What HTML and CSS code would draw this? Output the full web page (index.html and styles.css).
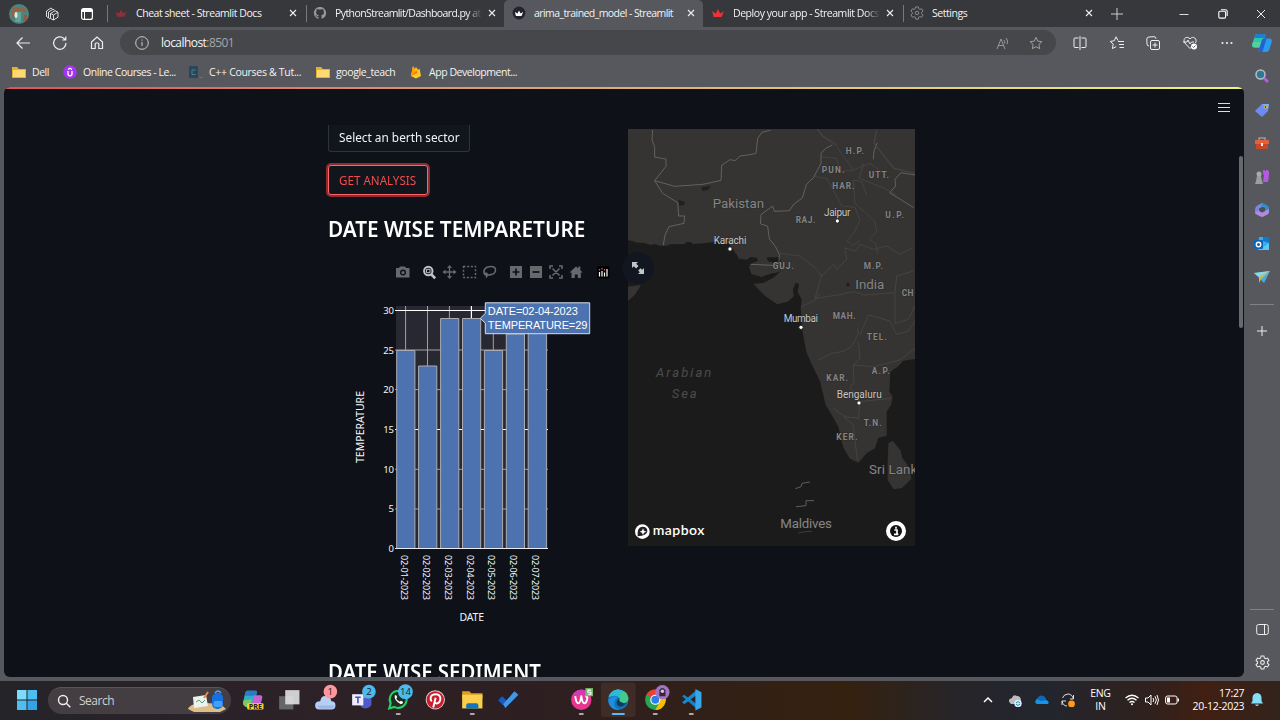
FILE: index.html
```html
<!DOCTYPE html>
<html lang="en">
<head>
<meta charset="utf-8">
<title>arima_trained_model - Streamlit</title>
<link rel="stylesheet" href="styles.css">
</head>
<body>
<svg class="defs" width="0" height="0">
  <symbol id="x" viewBox="0 0 8 8"><path d="M1 1l6 6M7 1l-6 6" fill="none" stroke="#eee" stroke-width="1.1"/></symbol>
  <symbol id="crown" viewBox="0 0 16 12"><path d="M2 11 0 3l5 3 3-6 3 6 5-3-3 8z"/></symbol>
  <symbol id="folder" viewBox="0 0 14 12"><path d="M0 1h5l2 2h7v9H0z" fill="#e3b02f"/><path d="M1 4h12v7H1z" fill="#ffda70"/></symbol>
  <symbol id="gear" viewBox="0 0 16 16"><path d="M6.5 1h3l.5 2.2 1.2.7 2.2-.7 1.5 2.6-1.6 1.5v1.4l1.6 1.5-1.5 2.6-2.2-.7-1.2.7-.5 2.2h-3L6 12.8l-1.200-.7-2.200.7L1.100 10.200 2.700 8.700V7.300L1.100 5.800l1.500-2.600 2.200.7L6 3.200z" fill="none" stroke-width="1.100"/><circle cx="8" cy="8" r="2" fill="none" stroke-width="1.100"/></symbol>
</svg>

<header class="tabs">
  <div class="tabs-lead">
    <svg class="avatar" viewBox="0 0 20 20"><circle cx="10" cy="10" r="10" fill="#48867f"/><path d="M2 7 4 4l10-1 4 4-2 2-3-2H6l-1 9-2-3z" fill="#916349"/><path d="M7 8h5v10H6z" fill="#5ea49a"/><ellipse cx="7" cy="11" rx="1.500" ry="3" fill="#ebe6da"/><path d="M15 11h3v5l-4 2z" fill="#8d5b45"/></svg>
    <svg class="i14" viewBox="0 0 14 14" fill="none" stroke="#ddd" stroke-linejoin="round"><path d="M3 10.500 1.500 9.500V4L6 1l1.500 1M5 12 3.500 11V5L8 2.300l1.500.8M5.500 6.500 10 3.700l3 1.500v5L8.500 13l-3-1.500zM5.500 6.500l3 1.500v5M8.500 8 13 5.200"/></svg>
    <svg class="i12" viewBox="0 0 12 12"><rect x=".6" y=".6" width="10.800" height="10.800" rx="2" fill="none" stroke="#fff" stroke-width="1.200"/><path d="M1 1h10v3H1z" fill="#fff"/><path d="M3.500 4v7" stroke="#fff"/></svg>
  </div>
  <div class="tab"><svg class="fav" viewBox="0 0 16 16"><use href="#crown" x="2" y="4" width="12" height="9" fill="#903136"/></svg><span class="t">Cheat sheet - Streamlit Docs</span><svg class="close"><use href="#x"/></svg></div>
  <div class="tab"><svg class="fav" viewBox="0 0 16 16"><path fill="#96979a" d="M8 1C4 1 1 4 1 8c0 3 2 5.700 4.800 6.700.4 0 .5-.2.5-.5v-1.500c-2 .4-2.500-1-2.500-1-.3-.8-.8-1-.8-1-.6-.4 0-.4 0-.4.800 0 1.200.7 1.200.7.700 1.200 1.700.9 2.100.7 0-.5.200-.9.400-1-1.600-.2-3.200-.8-3.200-3.500 0-.8.300-1.400.7-1.900 0-.200-.300-.9.100-1.900 0 0 .600-.2 2 .7a7 7 0 0 1 3.500 0c1.300-.9 1.900-.7 1.900-.7.400 1 .2 1.700.1 1.900.5.500.7 1.100.7 1.900 0 2.700-1.600 3.300-3.200 3.500.300.2.500.7.500 1.300v2c0 .2.100.5.500.5A7 7 0 0 0 15 8c0-4-3-7-7-7z"/></svg><span class="t t-long fade">PythonStreamlit/Dashboard.py at</span><svg class="close"><use href="#x"/></svg></div>
  <div class="tab active"><svg class="fav" viewBox="0 0 16 16"><circle cx="8" cy="8" r="7.300" fill="#22252e"/><use href="#crown" x="3" y="5" width="10" height="7" fill="#fff"/></svg><span class="t t-active">arima_trained_model - Streamlit</span><svg class="close"><use href="#x"/></svg></div>
  <div class="tab nosep"><svg class="fav" viewBox="0 0 16 16"><use href="#crown" x="1" y="3.500" width="14" height="10" fill="#ef3037"/></svg><span class="t fade">Deploy your app - Streamlit Docs</span><svg class="close"><use href="#x"/></svg></div>
  <div class="tab"><svg class="fav" stroke="#8c8d90"><use href="#gear"/></svg><span class="t">Settings</span><svg class="close"><use href="#x"/></svg></div>
  <svg class="newtab" viewBox="0 0 12 12" stroke="#ccc" stroke-width="1"><path d="M0 6h12M6 0v12"/></svg>
  <div class="winctl">
    <svg class="i10" viewBox="0 0 10 10" stroke="#ddd"><path d="M.5 5.500h9"/></svg>
    <svg class="i10" viewBox="0 0 10 10" fill="none" stroke="#fff" stroke-width="1.100"><rect x=".8" y="2.300" width="6.800" height="6.800" rx="1.200"/><path d="M3 .8h4.500Q9.200.8 9.200 2.500V7"/></svg>
    <svg class="i10" viewBox="0 0 10 10" stroke="#eee"><path d="m1 1 8 8M9 1 1 9"/></svg>
  </div>
</header>

<nav class="toolbar">
  <div class="nav">
    <svg class="i16" viewBox="0 0 16 16" fill="none" stroke="#eee" stroke-width="1.200"><path d="M15 8H2M7.500 2.500 2 8l5.500 5.500"/></svg>
    <svg class="i16" viewBox="0 0 16 16" fill="none" stroke="#eee" stroke-width="1.200"><path d="M14 8a6.200 6.200 0 1 1-2-4.500L13.500 5M13.800 1.500V5h-3.500"/></svg>
    <svg class="i16" viewBox="0 0 16 16" fill="none" stroke="#eee" stroke-width="1.200"><path d="M2.500 7 8 2l5.500 5v6.500h-3.700V9q0-1-1-1H7.200q-1 0-1 1v4.500H2.500z"/></svg>
  </div>
  <div class="address">
    <svg class="i14" viewBox="0 0 14 14" fill="none" stroke="#ccc"><circle cx="7" cy="7" r="6.300"/><path d="M7 6v4M7 3.500v1.200"/></svg>
    <span class="url">localhost<i>:8501</i></span>
    <svg class="i14" viewBox="0 0 14 14" fill="none" stroke="#98999b"><path d="m1 13 4-10 4 10M2.500 9.500h5M8 4q1.500 1.500.5 3.500M10 2q3 3 1 6"/></svg>
    <svg class="i14" viewBox="0 0 16 16" fill="none" stroke="#aaa"><path d="m8 1.500 2 4.400 4.800.6-3.500 3.200.9 4.800L8 12.200l-4.200 2.300.9-4.800L1.200 6.500 6 5.900z"/></svg>
  </div>
  <div class="actions">
    <svg class="i14" viewBox="0 0 14 14" fill="none" stroke="#eee"><path d="M5.500 2H2Q1 2 1 3v7.500q0 1 1 1h3.500M8.500 2H12q1 0 1 1v7.500q0 1-1 1H8.500M7 0v14"/></svg>
    <svg class="i14" viewBox="0 0 14 14" fill="none" stroke="#eee"><path d="M8 4.500 6 .8l-1.800 4-4 .6 3 2.700-.8 4.500 3.800-2M8 5.500h6M9 8.500h5M9.500 11.500H14"/></svg>
    <svg class="i14" viewBox="0 0 14 14" fill="none" stroke="#eee"><rect x="4.500" y="4.500" width="9" height="9" rx="1.500"/><path d="M9 6.500v5M6.500 9h5M3 10Q1 10 1 8L.8 3Q1 1 3 1l5-.3q2 0 2 2"/></svg>
    <svg class="i14" viewBox="0 0 14 14" fill="none" stroke="#eee"><path d="M12.500 7C15 3 10 -1 7 3 4-1-1 3 1.800 7l5.200 5.500 2-2M0 6h4l1-2 2 4 1.500-2H11"/><circle cx="11" cy="10.500" r="3" fill="#fff" stroke="none"/><path d="m9.500 10.500 1 1 2-2" stroke="#55565b"/></svg>
    <svg class="i14" viewBox="0 0 14 14" fill="#eee"><circle cx="2.500" cy="7" r="1.100"/><circle cx="7" cy="7" r="1.100"/><circle cx="11.500" cy="7" r="1.100"/></svg>
    <svg class="copilot" viewBox="0 0 20 20"><path d="M5.500 1H12q1.800 0 1.300 2L10 13q-.6 1.500-2 1.500H2.500Q-.5 14.500.3 11L2.500 4Q3.300 1 5.500 1z" fill="#2fc3b0"/><path d="M5.500 1H12q1.800 0 1.300 2l-.6 2H2.200Q3 1 5.500 1z" fill="#1c7fd2"/><path d="M1 9h10l-1.600 4.500Q9 14.500 8 14.500H2.500Q-.5 14.500.3 11z" fill="#4fd39a"/><path d="M12 5.500h5.500q3 0 2.200 3.500l-2.200 7q-.8 3-3 3H8q-1.800 0-1.300-2L10 7q.6-1.500 2-1.500z" fill="#2a9cf0"/><path d="M12 5.500h2.500L10.500 19H8q-1.800 0-1.300-2L10 7q.6-1.500 2-1.500z" fill="#2260d4"/></svg>
  </div>
</nav>

<div class="middle">
  <div class="left">
    <div class="bookmarks">
      <a><svg class="i14"><use href="#folder"/></svg><span>Dell</span></a>
      <a class="b2"><svg class="i14" viewBox="0 0 14 14"><circle cx="7" cy="7" r="6.800" fill="#a435f0"/><path d="M5 6v3q0 1.800 2 1.800T9 9V6M5 4.500l2-1.300 2 1.300" fill="none" stroke="#fff" stroke-width="1.300"/></svg><span>Online Courses - Le...</span></a>
      <a class="b3"><svg class="i14" viewBox="0 0 14 14"><rect x="0" y="1" width="9" height="12" fill="#27475c"/><path d="M6.500 5H3v4.500h3.500M10.500 12.500h3" fill="none" stroke="#5a7a8a"/></svg><span>C++ Courses &amp; Tut...</span></a>
      <a class="b4"><svg class="i14"><use href="#folder"/></svg><span>google_teach</span></a>
      <a class="b5"><svg class="i14" viewBox="0 0 14 14"><path d="m2 11 2-10 2 3 1-2 2 3 1.500-1.500L12 11l-5 2.500z" fill="#ffca28"/><path d="M2 11 4 1l3 5.500z" fill="#ffa000"/><path d="m2 11 6-6 .5 3z" fill="#f57c00"/></svg><span>App Development...</span></a>
    </div>

    <main class="page">
      <div class="rainbow"></div>
      <div class="apphead"><span class="burger"></span></div>
      <div class="content">
        <section class="panel">
          <div class="select"><span>Select an berth sector</span></div>
          <button class="analysis"><span>GET ANALYSIS</span></button>
          <h2><span class="h-temp">DATE WISE TEMPARETURE</span></h2>
          <svg class="chart" viewBox="328 250 290 390">
            <g fill="#67696d">
              <path d="M396 268h3l1-1.500h5l1 1.500h3.500v9.500H396z"/><circle cx="403" cy="272.500" r="3" fill="#0e1117"/><circle cx="403" cy="272.500" r="1.600"/>
              <g fill="none" stroke="#c2c3c4"><circle cx="428.300" cy="271" r="4.200" stroke-width="2"/><path d="m431.500 274.500 3.700 3.800" stroke-width="2.600"/><path d="M426.500 269.300h3.500v3.400h-3.500z"/></g>
              <path d="m449.500 265 2.500 3h-1.800v3.300h3.300v-1.800l3 2.500-3 2.500v-1.800h-3.300v3.300h1.800l-2.500 3-2.500-3h1.800v-3.300h-3.300v1.800l-3-2.500 3-2.500v1.800h3.300V268H447z"/>
              <rect x="463.500" y="266.500" width="12" height="11" fill="none" stroke="#67696d" stroke-width="1.500" stroke-dasharray="2 1.700"/>
              <path d="M485 275q-2-3-.5-5.500 2-3 6.500-3t4.500 3.500-4 4.500-6.500 0q0-2 2-1 .8 2-1 4" fill="none" stroke="#67696d" stroke-width="1.500"/>
              <path d="M510 266h12v12h-12z"/><path d="M516 268.500v7M512.500 272h7" stroke="#0e1117" stroke-width="1.700"/>
              <path d="M530 266h12v12h-12z"/><path d="M532.500 272h7" stroke="#0e1117" stroke-width="1.700"/>
              <path d="M550 269v-3h3M559 266h3v3M562 275v3h-3M553 278h-3v-3M552.500 268.500l7 7M559.500 268.500l-7 7" fill="none" stroke="#67696d" stroke-width="1.500"/>
              <path d="m569.500 272.500 6.500-6 2.300 2V266.500h2v3.700l2.500 2.300h-2v5.500h-3v-3.500h-3v3.500h-3.300v-5.500z"/>
              <rect x="597" y="266" width="12.500" height="12.500" rx="1.500" fill="#000"/><path d="M599.500 272v4.500M602 271v5.500M604.500 272.500v4M607 269v7.500" stroke="#fff" stroke-width="1.200"/><path d="M599.500 269v1.500M602 268v1.500M604.500 269v1.500" stroke="#e05a71" stroke-width="1.200"/>
            </g>
            <path d="M396 306h151.700v242.500H396z" fill="#282832"/>
            <path d="M405.600 306v242M427.500 306v242M449.400 306v242M493.300 306v242M515.200 306v242M537 306v242M395 350h153M395 389.600h153M395 469.300h153M395 509h153" stroke="#a1a1a5" fill="none"/>
            <path d="M471.400 306v12M395 310.500h153M395 429.500h153" stroke="#fff" stroke-width="1.200"/>
            <g fill="#4c72b0" stroke="#a9aab2"><path d="M396.700 350.500h18.200v198h-18.200zM418.600 366h18.200v182.500h-18.200zM440.600 318.500h18.200v230h-18.200zM462.500 318.500h18.200v230h-18.200zM484.400 350.500h18.200v198h-18.200zM506.300 334h18.200v214.500h-18.200zM528.200 326.500h18.200v222h-18.200z"/></g>
            <path d="M395 548.500h153" stroke="#e8eaf0"/>
            <g class="tick" text-anchor="end"><text x="394" y="314">30</text><text x="394" y="353.700">25</text><text x="394" y="393.300">20</text><text x="394" y="433">15</text><text x="394" y="472.700">10</text><text x="394" y="512.300">5</text><text x="394" y="552">0</text></g>
            <g class="date">
              <text transform="translate(401 555) rotate(90)" textLength="45">02-01-2023</text><text transform="translate(423 555) rotate(90)" textLength="45">02-02-2023</text><text transform="translate(445 555) rotate(90)" textLength="45">02-03-2023</text><text transform="translate(467 555) rotate(90)" textLength="45">02-04-2023</text><text transform="translate(488 555) rotate(90)" textLength="45">02-05-2023</text><text transform="translate(510 555) rotate(90)" textLength="45">02-06-2023</text><text transform="translate(532 555) rotate(90)" textLength="45">02-07-2023</text>
            </g>
            <text class="axis" transform="translate(363.500 463) rotate(-90)" textLength="72">TEMPERATURE</text>
            <text class="axis" x="459.500" y="621" textLength="24.500">DATE</text>
            <path d="M485.300 302.800h104.400v30.900H485.300v-10.500l-5-4.900 5-4.900z" fill="#4c72b0" stroke="#d5dced"/>
            <g class="tip"><text x="487.800" y="315.400" textLength="90">DATE=02-04-2023</text><text x="487.800" y="329.300" textLength="99.500">TEMPERATURE=29</text></g>
          </svg>
          <h2 class="second"><span class="h-sed">DATE WISE SEDIMENT</span></h2>
        </section>

        <section class="mapbox">
          <svg class="map" viewBox="24 27 861 1251">
            <path d="M24 27H885V717l-35 5-17 18-18 12-5 8v20l-2 35 10 15-5 25-13 20v73l-25 5-10 32-25 15-25 28-25-12-20-33-15-63-15-27-23-38-17-72-25-50-15-35-12-60-6-75 3-25-12-22 4-24-10-4-8 20 2 20-18 15-32 8-35-25-33-37 20-3 25-10 25-22 15-14-6-14-85-2-38 6-10-28-40-18-50 2-65 4-32 5-38 4-42-6-64-12z" fill="#353432"/>
            <path d="M387 440q5-20 53-20l32 8-17 32-30 10-30-8zM24 500l38-4-18 28-20 18zM803 1030l2-60 13-8 24 30 5 22 22 30 5 32-28 28-25 4-18-28z" fill="#353432"/>
            <path d="m24 361 15 2 5 4 28 2 20 6 12-3 15 5 16 1 18-5 42-1 4-6h12l8 6 40-3 50-7 18 10 12 14 6 12 12 18 24 3 10-8 20 2 4 14-18 10-14 12 2 14 12 16 22 4 26-4 14-10 24-8 10 12-22 20-35 12-20 5-24 2-60 30-240-20-75-100z" fill="#1b1b1b"/>
            <path d="M387 440q5-18 53-20l44-2 10 30-9 10-30 2-30 10-30-8z" fill="#353432"/>
            <path d="M440 412h38l6 12-20 4-20-4zM440 480l22-20 22-6-10 20-20 10-12 4z" fill="#1b1b1b"/>
            <path d="m24 500 38-4-18 28-20 18z" fill="#353432"/>
            <path d="m400 491 30-2 30-16 20-18 30-10 30 40-15 5-7 20 2 20-18 15-30 8-36-24z" fill="#353432"/>
            <path d="m245 202 27-5-8 13-18 2zM175 239l20 7-1 8-16 4z" fill="#20201f"/><circle cx="684" cy="494" r="5" fill="#1b1b1b"/>
            <g fill="none" stroke="#6c6b68" stroke-width="2.500">
              <path d="m98 30-2 30 8 20v31l34 6v22l-34 43 60 17 85-6 54-12 2-45 25-17 15 3 15-14 30-4 18-4 5-45 13-18 25-6"/>
              <path d="m104 182 24 38 45 28 3 40h18l-2 22-45 10-12 25-5 30M637 75l-20 10-14 15v30l-22 42-22 22-12 40-25 18-14 20-45 2-5-16-35 26-2 27 22 8 5 38 18 22 12 24-1 28-20 5-65-3"/>
              <path d="m885 165-42-7-18 20 2 20-18 20 72 45"/><path d="m760 118 2-25 10-25M526 1106l17-6 3-10 24-4M528 1160l30-3v-15h24"/>
            </g>
            <g fill="none" stroke="#4d4c4a" stroke-width="2">
              <path d="m650 80 50 70 50-20 40 30M585 170l35 5 20 35 25 48 40 4 15 40-20 40-20 20 20 14 20-15M600 110l50 5 10 40 40-5M700 180l25 5 15 40M730 130l-12 45 75 30 35 20M700 180l5 70 60 55 5 30-22 22 20 15 5 30M480 400l60 8 50 40 15 20 35-35 10 15 30-30-5-35 30 10 15-20 40 15 40-10 40 25 40-20M605 465l-20 70 70-10 45-10 35 10 90-7 5-50 50-15M545 560l40-20 15-20M825 520v90l40-12 20-40M720 645l25-60 30 8 35 10 20 40 35-10 20-30M595 720l40-20 30-5 30-15 20-40-2-15M715 665l5 50-20 20 2 55-12 10 15 25 12 20 95-10M700 735l60 5 80-20 45-35M720 845l-5 50-40-5-35-25M670 890l30 25 5 50 8 55"/>
              <path d="m590 25 20 25 40 25M770 30l-8 40 60 75 63 15" stroke="#454442" stroke-width="4"/>
            </g>
            <g fill="#fff" stroke="#222" stroke-width="3"><circle cx="652" cy="303" r="6.500"/><circle cx="330" cy="387" r="6.500"/><circle cx="543" cy="622" r="6.500"/><circle cx="717" cy="849" r="6.500"/></g>
            <g class="country"><text x="278" y="263" textLength="154">Pakistan</text><text x="706" y="507" textLength="87">India</text><text x="747" y="1062" textLength="145">Sri Lank</text><text x="481" y="1224" textLength="155">Maldives</text></g>
            <g class="city"><text x="612" y="288" textLength="79">Jaipur</text><text x="281" y="371" textLength="98">Karachi</text><text x="491" y="605" textLength="103">Mumbai</text><text x="650" y="833" textLength="135">Bengaluru</text></g>
            <g class="state"><text x="677" y="101" textLength="55">H.P.</text><text x="605" y="159" textLength="69">PUN.</text><text x="746" y="174" textLength="61">UTT.</text><text x="637" y="206" textLength="66">HAR.</text><text x="796" y="294" textLength="56">U.P.</text><text x="527" y="309" textLength="59">RAJ.</text><text x="458" y="446" textLength="63">GUJ.</text><text x="731" y="447" textLength="58">M.P.</text><text x="845" y="528" textLength="35">CH</text><text x="638" y="598" textLength="69">MAH.</text><text x="740" y="659" textLength="60">TEL.</text><text x="755" y="761" textLength="55">A.P.</text><text x="619" y="782" textLength="65">KAR.</text><text x="731" y="917" textLength="54">T.N.</text><text x="649" y="961" textLength="63">KER.</text></g>
            <g class="sea"><text x="108" y="772" textLength="166">Arabian</text><text x="155" y="834" textLength="75">Sea</text></g>
            <path d="m535 1239 20-4 22-1" fill="none" stroke="#4d4c4a" stroke-width="2"/>
            <circle cx="67" cy="1235" r="22" fill="#fff"/><path d="M53 1249q-3-27 14-29 16 0 15 14t-29 15z" fill="#222"/><path d="m69 1225 3 7 7 3-7 3-3 7-3-7-7-3 7-3z" fill="#fff"/>
            <text class="brand" x="98" y="1246" textLength="155">mapbox</text>
            <circle cx="828" cy="1233" r="30" fill="#fff"/><circle cx="828" cy="1233" r="18" fill="#111"/><path d="M823 1230h8v13M822 1243h13M828 1220v6" stroke="#fff" stroke-width="5" fill="none"/>
          </svg>
          <div class="expand"><svg class="i14" viewBox="0 0 14 14"><path d="M1 1h6L5.200 2.800 7.500 5.100 5.100 7.500 2.800 5.200 1 7zM13 13H7l1.800-1.800-1.600-1.600 2.400-2.400 1.600 1.600L13 7z" fill="#c2c5c9"/></svg></div>
        </section>
        <span class="scroll"></span>
      </div>
    </main>
  </div>

  <aside class="side">
    <svg class="i16" viewBox="0 0 16 16"><circle cx="6.500" cy="6.500" r="4.500" fill="#28799a" stroke="#b9bdc0" stroke-width="1.500"/><path d="m10 10 4 4" stroke="#b75ce0" stroke-width="2.800"/></svg>
    <svg class="i16" viewBox="0 0 16 16"><path d="m1 9 7-7h7l-1 7-6 6z" fill="#6c8bf4"/><path d="M8 2h7l-1 5z" fill="#77b3ef"/><circle cx="11.500" cy="5" r="1.400" fill="#444" stroke="#e7c154"/></svg>
    <svg class="i16" viewBox="0 0 16 16"><path d="M5 5V3h6v2" fill="none" stroke="#999" stroke-width="1.500"/><path d="M1 5h14v4H1z" fill="#e1613a"/><path d="M2 9h12v5H2z" fill="#c8472b"/><path d="M7 8h2v3H7z" fill="#eee"/></svg>
    <svg class="i16" viewBox="0 0 16 16"><circle cx="5" cy="5" r="2.500" fill="#aaa"/><path d="M3 7h4l1 5 1 3H1l1-3z" fill="#9d9d9d"/><path d="M9 1h2v1h1V1h2v1h1v4l-1 7H9L10 6 9 5z" fill="#b35bdd"/></svg>
    <svg class="i16" viewBox="0 0 16 16"><path d="M8.500.8 4 3Q1 4.500 1 8v3l4-2V6.500L10 4z" fill="#7b86e4"/><path d="m8.500.8 5 2.700Q15 4.500 15 6.500V11l-4-2V6L7 4z" fill="#2f8fc4"/><path d="m1 10.500 4-2 3 2 7-3.500v3q0 1.500-1.500 2.500l-4 2q-1.500.8-3 0l-4-2Q1 11.800 1 10.500z" fill="#b08ade"/><path d="m5.500 6.500 3-1.500L11 6.500V9l-3 1.500L5.500 9z" fill="#4c4e57"/></svg>
    <svg class="i16" viewBox="0 0 16 16"><path d="M5 1h10v13H4z" fill="#37aaf0"/><path d="M9 1h6v6l-6-2z" fill="#1478c9"/><path d="m5 14 10-7v7z" fill="#58c9ef"/><rect y="4" width="9" height="9" rx="1" fill="#0b65b8"/><circle cx="4.500" cy="8.500" r="2.200" fill="none" stroke="#fff" stroke-width="1.400"/></svg>
    <svg class="i16" viewBox="0 0 16 16"><path d="M0 4 16 2 10 14 6 10z" fill="#48a9e5"/><path d="M0 4 16 2 5 8z" fill="#8ed9e0"/><path d="m16 2-11 6v6l2-4z" fill="#d9b944"/></svg>
    <hr>
    <svg class="plus" viewBox="0 0 10 10" stroke="#eee"><path d="M0 5h10M5 0v10"/></svg>
    <div class="side-foot">
      <hr>
      <svg class="i13" viewBox="0 0 13 13" fill="none" stroke="#eee"><rect x=".7" y="1.500" width="11.600" height="10" rx="2"/><path d="M8.500 2v9"/></svg>
      <svg class="i15" stroke="#eee"><use href="#gear"/></svg>
    </div>
  </aside>
</div>

<footer class="taskbar">
  <svg class="start" viewBox="0 0 20 20" fill="#4ebdf0"><path d="M0 0h9.500v9.500H0z" fill="#7bdcff"/><path d="M10.500 0H20v9.500h-9.500zM0 10.500h9.500V20H0z"/><path d="M10.500 10.500H20V20h-9.500z" fill="#36a2e6"/></svg>
  <div class="search">
    <svg class="i14" viewBox="0 0 14 14" fill="none" stroke="#eee" stroke-width="1.400"><circle cx="6" cy="6" r="4.500"/><path d="m9.300 9.300 4 4"/></svg>
    <span>Search</span>
    <svg class="art" viewBox="0 0 38 22"><path d="M0 19q2-6 18-6t20 6l-6 3H6z" fill="#dfbd86"/><path d="m5 7 13-2 2 11-14 2z" fill="#edf2ed"/><path d="m8 12 3-2 3 3 3-3" stroke="#5a9c76" fill="none"/><path d="m16 8 4-6" stroke="#e6884a" stroke-width="2"/><rect x="24" y="3" width="11" height="16" rx="5" fill="#1670df"/><rect x="25.500" y="11" width="9" height="6" rx="2" fill="#43a0fa"/><path d="M27 3q3-4 6 0" stroke="#4aa8fd" fill="none" stroke-width="1.500"/></svg>
  </div>
  <div class="apps">
    <svg viewBox="0 0 36 36"><path d="M13 8.500h8q2 0 1.500 2L19 21q-.6 2-2.500 2H11q-3 0-2-3.500L11 11q.5-2.500 2-2.500z" fill="#30adc8"/><path d="M13 8.500h8q2 0 1.500 2l-1 3H10.500l.5-2.500q.5-2.500 2-2.500z" fill="#267dca"/><path d="M20 13h6q2.500 0 1.700 3l-2 8q-.6 2-2.700 2h-7l3.500-11q.2-2 .5-2z" fill="#c762d2"/><path d="m9.500 18 8.500-1-3 8h-2q-4.500-1-4-5z" fill="#77ca61"/><rect x="13" y="21" width="16" height="6" rx="1" fill="#ffd22b"/><text x="14.500" y="26.200" class="pre" textLength="13" lengthAdjust="spacingAndGlyphs">PRE</text></svg>
    <svg viewBox="0 0 36 36"><path d="M8 14h14v13H8z" fill="#666"/><path d="M14 8h14v14H14z" fill="#ddd" opacity=".92"/></svg>
    <svg viewBox="0 0 36 36"><path d="M12 27q-4 0-4-4t5-4q1-6 6-5 4 0 5 5 4 0 4 4t-4 4z" fill="#b8cff5"/><path d="M10 23h17l-2 3H12z" fill="#9ab7e6"/><circle cx="23" cy="9.500" r="6.700" fill="#ff969c"/><text class="badge" x="23" y="13">1</text></svg>
    <svg viewBox="0 0 36 36"><circle cx="22" cy="14" r="4" fill="#7b83e8"/><path d="M16 16h11v6q-1 4-6 4t-5-4z" fill="#5059c9"/><rect x="8" y="12" width="11" height="11" fill="#eef"/><path d="M11 15h5.500M13.700 15v6" stroke="#4b53ba" stroke-width="1.600"/><circle cx="24.500" cy="9.500" r="6.700" fill="#4abaf0"/><text class="badge" x="24.500" y="13">2</text></svg>
    <svg viewBox="0 0 36 36"><path d="m9 26 1.500-5A8.300 8.300 0 1 1 14 24.500z" fill="#202b22" stroke="#25d366" stroke-width="2"/><path d="M14.500 13q-1 5 6 9l2-1v-1.500l-2-1-1 1q-3-1-3.500-3.500l1-1-1-2z" fill="#fff"/><circle cx="25" cy="9.500" r="7.300" fill="#4abaf0"/><text class="badge" x="25" y="13">14</text><rect x="15.500" y="30.500" width="5" height="2" rx="1" fill="#aaa"/></svg>
    <svg viewBox="0 0 36 36"><circle cx="18" cy="17.500" r="9" fill="#c91d2e" stroke="#e4c7c4"/><path d="M14.500 19q-1.500-1.500-1-4 1-3 5-3t4.500 4q0 4-3 5-1.500.5-2.500-1M18.300 15.500 16 25" fill="none" stroke="#fff" stroke-width="1.900"/></svg>
    <svg viewBox="0 0 36 36"><path d="M8 9h7l2 2h11v5H8z" fill="#dc9f20"/><path d="M8 12.500h20V26H8z" fill="#f9cf4b"/><path d="M12 26v-3q0-2 2-2h8q2 0 2 2v3z" fill="#1474bd"/><rect x="15.500" y="30.500" width="5" height="2" rx="1" fill="#aaa"/></svg>
    <svg viewBox="0 0 36 36"><path d="m8 18 4-4 5 5-4 4z" fill="#185abd"/><path d="m13 22 11-13 4 3.500L15 25.500z" fill="#3e98ec"/></svg>
    <svg class="gap" viewBox="0 0 36 36"><circle cx="18" cy="17.500" r="10" fill="#e93592"/><path d="M9 14a10 10 0 0 1 13-6v5H9z" fill="#c63bd0" opacity=".6"/><path d="M12 14q1 7 3 7t3-7q1 7 3 7t3-5q0-2-2-2" fill="none" stroke="#fff" stroke-width="1.900" stroke-linejoin="round"/><rect x="22" y="6" width="7.500" height="8" fill="#72bc6c"/><path d="M27.500 8h-3v2h3v2h-3" stroke="#fff" fill="none"/><rect x="15.500" y="30.500" width="5" height="2" rx="1" fill="#aaa"/></svg>
    <svg viewBox="0 0 36 36"><rect x="1" y=".5" width="34" height="34" rx="3" fill="#3f2c27"/><circle cx="18" cy="17.500" r="10" fill="#1473b8"/><path d="M8.500 15Q11 7.500 18 7.500q9 1 10 8 0 6-7 5-4-1-1.500-4Q18 10 8.500 15z" fill="#42cb8c"/><path d="M8.500 15Q11 7.500 18 7.500q4 .3 6 2-5 0-5 7-2-5-10.500-1.500z" fill="#2eb9d6"/><path d="M8 18q4-6 10-3-3 1-4 6 0 5 5 6.400Q9 28 8 18z" fill="#1e8fdf"/><path d="M19 15.500q-1 2 1 4 3 2 6 1-3 5-8 3-4-3 1-8z" fill="#123c5c"/><rect x="11.500" y="30.500" width="13" height="2" rx="1" fill="#5abaf5"/></svg>
    <svg viewBox="0 0 36 36"><circle cx="18" cy="17.500" r="10" fill="#2ba351"/><path d="M18 17.500 9.300 12.500A10 10 0 0 1 27 13z" fill="#e94235"/><path d="M18 12.500h9a10 10 0 0 1-9 15l4.500-8z" fill="#fabd05"/><circle cx="18" cy="17.500" r="5" fill="#fff"/><circle cx="18" cy="17.500" r="3.900" fill="#2c80ee"/><circle cx="25" cy="10" r="7" fill="#a573c4"/><path d="M22 14V8q3-4 6 0v6z" fill="#33283f"/><circle cx="25" cy="9" r="1.700" fill="#d8c8d3"/><rect x="15.500" y="30.500" width="5" height="2" rx="1" fill="#aaa"/></svg>
    <svg viewBox="0 0 36 36"><path d="m9 14 2-1.500 12 9V26z" fill="#1482c8"/><path d="m9 20 2 2 12-9V8z" fill="#1789d2"/><path d="m22 7 6 3v15l-6 3z" fill="#37a7ec"/><rect x="15.500" y="30.500" width="5" height="2" rx="1" fill="#aaa"/></svg>
  </div>
  <div class="tray">
    <svg class="i14" viewBox="0 0 14 14" fill="none" stroke="#fff" stroke-width="1.500"><path d="m3 9 4-4 4 4"/></svg>
    <svg class="i14" viewBox="0 0 14 14"><path d="M2 10q-3-4 2-5 1-4 5-2 4 0 4 5v3H3z" fill="#bbb"/><circle cx="10" cy="10.500" r="3.700" fill="#d7edf7"/><path d="M8 10q2-3 4 0M8 11q2 3 4 0" fill="none" stroke="#2588bc"/></svg>
    <svg class="i14" viewBox="0 0 14 14"><path d="M2 11q-3-1-1-4 1-2 3-1 1-4 5-2 2 1 2 3 4 1 2 4z" fill="#1594e8"/><path d="M2 6q2-5 7-3l2 4-5 1z" fill="#0a67bd"/></svg>
    <svg class="i14" viewBox="0 0 14 14"><path d="M12.500 6Q11 1 7 1T1.500 5M1 8q1 5 5 5M12.500 2v4H9M1 12V8h4" fill="none" stroke="#ddd"/><circle cx="10.500" cy="11" r="3.400" fill="#ff9c13"/></svg>
    <div class="lang"><span>ENG</span><span>IN</span></div>
    <div class="sys">
    <svg class="i14" viewBox="0 0 14 14" fill="none" stroke="#fff" stroke-width="1.300"><path d="M.5 5q6.500-5.500 13 0M2.500 7.300q4.500-4 9 0M4.500 9.500q2.500-2 5 0"/><circle cx="7" cy="11.300" r="1" fill="#fff" stroke="none"/></svg>
    <svg class="i14" viewBox="0 0 14 14" fill="none" stroke="#fff"><path d="M.5 5v4h2.500l3 3V2L3 5zM8 5q1.500 2 0 4M10 3.300q2.800 3.700 0 7.400M12 2q3 5 0 10"/></svg>
    <svg class="i14" viewBox="0 0 14 14" fill="none" stroke="#fff"><rect x=".6" y="3" width="11.500" height="8" rx="2"/><path d="M2 4.500h3v5H2z" fill="#fff" stroke="none"/><path d="M13.300 5.500v3" stroke-width="1.300"/></svg>
    </div>
    <div class="clock"><span>17:27</span><span>20-12-2023</span></div>
    <svg class="bell" viewBox="0 0 12 14" fill="#86def8"><path d="M0 10.500 1.500 8V5q0-4.500 4.500-5 4.500.5 4.500 5v3l1.500 2.500zM4 11.500h4q-2 3-4 0z"/></svg>
  </div>
</footer>
</body>
</html>
```
FILE: styles.css
```css
* { box-sizing: border-box; }
body { margin: 0; width: 1280px; height: 720px; overflow: hidden; display: flex; flex-direction: column; background: #57585d; color: #f3f3f3; font: 10.5px "Open Sans", "Noto Sans", sans-serif; }
svg { display: block; flex: none; }
.defs { position: absolute; }
.i10 { width: 10px; height: 10px; } .i12 { width: 12px; height: 12px; } .i13 { width: 13px; height: 13px; }
.i14 { width: 14px; height: 14px; } .i15 { width: 15px; height: 15px; } .i16 { width: 16px; height: 16px; }

.tabs { height: 27px; flex: none; display: flex; align-items: stretch; background: #37383c; }
.tabs-lead { width: 106px; display: flex; align-items: center; padding-left: 9px; gap: 16px; }
.tabs-lead .i12 { margin-left: 6px; }
.avatar { width: 20px; height: 20px; }
.tab { width: 199px; display: flex; align-items: center; padding: 0 8px 1px 7px; position: relative; white-space: nowrap; border-left: 1px solid transparent; background: linear-gradient(#77787b, #77787b) 0 5px / 1px 17px no-repeat; }
.tab.active { background: #57585d; border-radius: 5px 5px 0 0; }
.tab.nosep { background: none; }
.fav { width: 14px; height: 14px; margin-right: 8px; }
.t { flex: 1; overflow: hidden; letter-spacing: -.45px; font-size: 10.5px; }
.t-long { letter-spacing: -.58px; }
.t-active { letter-spacing: -.58px; }
.close { width: 8px; height: 8px; margin-left: 6px; }
.fade { -webkit-mask-image: linear-gradient(90deg, #000 90%, transparent); mask-image: linear-gradient(90deg, #000 90%, transparent); }
.newtab { width: 12px; height: 12px; margin: 8px 0 0 10px; }
.winctl { flex: 1; display: flex; align-items: center; justify-content: flex-end; gap: 28.500px; padding-right: 14px; }

.toolbar { height: 31px; flex: none; display: flex; align-items: center; }
.nav { width: 120px; display: flex; gap: 21px; padding-left: 15px; }
.address { width: 936px; height: 25px; border-radius: 13px; background: #46474a; display: flex; align-items: center; padding: 0 13px 0 15px; gap: 19px; }
.url { flex: 1; margin-left: -7px; font-size: 12px; letter-spacing: -.55px; }
.url i { color: #a5a6a8; font-style: normal; }
.actions { display: flex; align-items: center; gap: 22.700px; padding-left: 17px; }
.copilot { width: 20px; height: 20px; margin-left: -4px; }

.middle { flex: 1; display: flex; min-height: 0; }
.left { width: 1244px; display: flex; flex-direction: column; }
.bookmarks { height: 29px; flex: none; display: flex; align-items: center; padding: 0 0 2px 12px; letter-spacing: -.46px; }
.bookmarks a { display: flex; align-items: center; gap: 6px; width: 51px; white-space: nowrap; }
.bookmarks .b2 { width: 126px; } .bookmarks .b3 { width: 127px; letter-spacing: -.3px; } .bookmarks .b4 { width: 93px; letter-spacing: -.4px; }
.page { flex: none; width: 1240px; height: 590px; margin-left: 3.500px; background: #0e1117; border-radius: 6px; overflow: hidden; }
.rainbow { height: 2px; background: linear-gradient(90deg, #dd5355, #dc9f72 40%, #edf47c); }
.apphead { height: 36px; display: flex; justify-content: flex-end; padding: 14px 14px 0; }
.burger { width: 12px; height: 9px; border-top: 1.300px solid #ddd; border-bottom: 1.300px solid #ddd; background: linear-gradient(#ddd, #ddd) 0 50% / 12px 1px no-repeat; }
.content { height: 552px; overflow: hidden; display: flex; padding-left: 324.500px; font-family: "Noto Sans", sans-serif; }
.panel { width: 300px; }
.select { width: 142px; height: 27px; border: 1px solid #30333b; border-top: 0; border-radius: 0 0 3px 3px; padding: 4px 10px 0; background: #11151c; font-size: 12.500px; white-space: nowrap; }
.select span { display: inline-block; transform-origin: left; transform: scaleX(.945); line-height: 18px; }
.analysis { display: block; width: 100px; height: 30px; margin-top: 13px; padding: 0 10px; text-align: left; border: 1px solid #ff6364; border-radius: 3px; box-shadow: 0 0 0 2px #8f2c32; background: #11151c; color: #f14d4e; font: 12.500px "Noto Sans", sans-serif; white-space: nowrap; }
.analysis span { display: inline-block; transform-origin: left; transform: scaleX(.93); }
h2 { margin: 17px 0 0; height: 32px; line-height: 32px; font-size: 22px; font-weight: 600; white-space: nowrap; color: #fff; }
h2 span { display: inline-block; transform-origin: left; }
.h-temp { transform: scaleX(.943); }
.h-sed { transform: scaleX(.926); }
.chart { width: 290px; height: 390px; margin-top: 6px; }
.second { margin-top: 14.500px; }
.tick { fill: #f2f5fa; font: 9.500px "Noto Sans", sans-serif; }
.date { fill: #f2f5fa; font: 9px "Noto Sans", sans-serif; }
.axis { fill: #f2f5fa; font: 10.500px "Noto Sans", sans-serif; }
.tip { fill: #fff; font: 11px "Liberation Sans", sans-serif; }
.mapbox { position: relative; width: 287px; height: 417px; margin-top: 4px; background: #1b1b1b; }
.map { width: 287px; height: 417px; }
.expand { position: absolute; left: -6px; top: 123px; width: 32px; height: 32px; border-radius: 50%; background: #111620; display: flex; align-items: center; justify-content: center; }
.map text { font-family: Roboto, sans-serif; paint-order: stroke; stroke: #22222288; stroke-width: 3px; }
.country { fill: #858585; font-size: 40px; } .city { fill: #c7c7c7; font-size: 30px; }
.state { fill: #858585; font-size: 25px; font-weight: 700; } .sea { fill: #4b4b4b; font-size: 39px; font-style: italic; }
.map .brand { fill: #fff; font: 600 42px Lato, sans-serif; }
.scroll { width: 4px; height: 172px; margin: 31px 0 0 324px; border-radius: 3px; background: #68696c; }

.side { width: 36px; display: flex; flex-direction: column; align-items: center; gap: 17.500px; padding-top: 10px; }
hr { width: 24px; height: 1px; border: 0; margin: 1px 0 0; background: #808185; flex: none; }
.plus { width: 10px; height: 10px; margin-top: 4px; }
.side-foot { margin-top: auto; display: flex; flex-direction: column; align-items: center; gap: 19px; padding-bottom: 11.500px; }
.side-foot hr { margin: 0 0 -6px; }

.taskbar { height: 39px; flex: none; display: flex; align-items: center; padding-bottom: 1px; background: linear-gradient(90deg, #242429, #2b2228 20%, #2e1f20 45%, #35210f 66%, #26252a 75%, #23252e 82%, #30211c 90%, #411f12 94%, #32231c); }
.start { width: 20px; height: 20px; margin: 0 11px 0 17px; }
.search { width: 183px; height: 27px; border-radius: 14px; display: flex; align-items: center; padding: 0 5px 0 9px; background: #443d42; border-top: 1px solid #5a5458; font-size: 12px; letter-spacing: -.5px; color: #d2cfd0; }
.search span { flex: 1; margin-left: 8px; }
.art { width: 38px; height: 22px; }
.apps { display: flex; margin-left: 3px; }
.apps svg { width: 36.600px; height: 36.600px; }
.apps .gap { margin-left: 36.600px; }
.badge { fill: #202020; font: 9.500px "Open Sans", sans-serif; text-anchor: middle; }
.apps .pre { fill: #222; font: bold 6px "Open Sans", sans-serif; }
.tray { flex: 1; display: flex; align-items: center; justify-content: flex-end; gap: 12.700px; padding-right: 17px; }
.lang, .clock { display: flex; flex-direction: column; align-items: center; font-size: 10.500px; line-height: 13px; letter-spacing: -.3px; color: #fff; }
.lang { width: 25px; }
.sys { display: flex; gap: 6px; margin-left: -1px; }
.clock { width: 53px; align-items: flex-end; }
.bell { width: 12px; height: 14px; margin-left: -6px; }
```
